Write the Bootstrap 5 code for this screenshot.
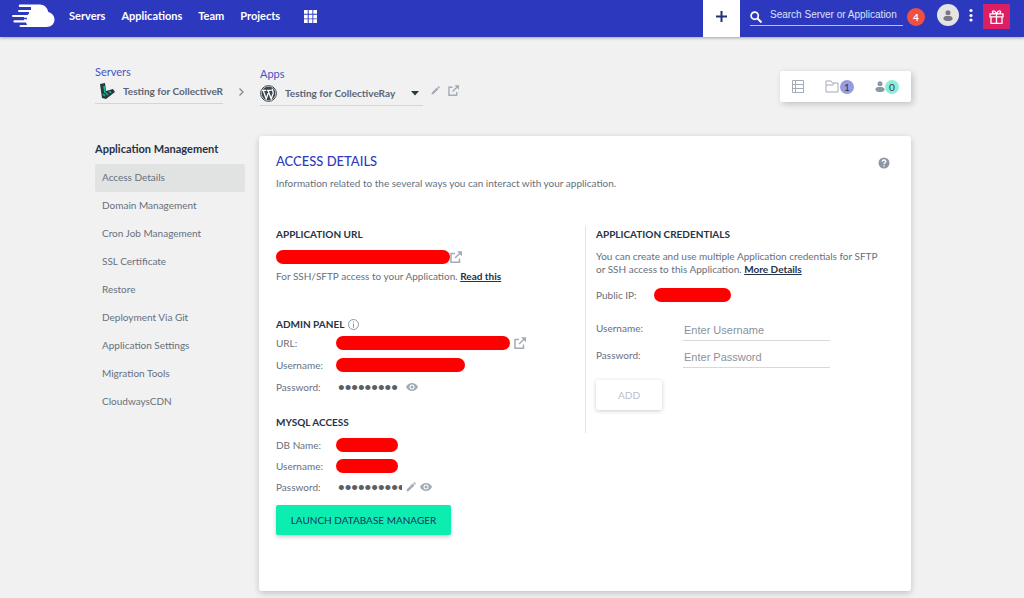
<!DOCTYPE html>
<html lang="en">
<head>
<meta charset="utf-8">
<meta name="viewport" content="width=device-width, initial-scale=1">
<title>Access Details</title>
<link href="https://cdn.jsdelivr.net/npm/bootstrap@5.3.0/dist/css/bootstrap.min.css" rel="stylesheet">
<style>
  body { background: #f1f1f1; color: #66707c; font: 10px/16px Lato, "Liberation Sans", sans-serif; }
  svg { display: block; flex: none; }
  button.plain { border: 0; background: none; padding: 0; color: #a3abb6; }

  .topbar { background: #2c39bf; height: 37px; padding: 0 14px 0 12px; box-shadow: 0 1px 3px #0005; }
  .topbar-links { padding-top: 8px; margin-left: 14px; }
  .topbar-link { color: #fff; font: 700 11px/16px Lato, sans-serif; text-decoration: none; }
  .add-new { width: 37px; height: 37px; background: #fff !important; }
  .search-box { border-bottom: 1px solid #bcc1f0; width: 153px; height: 22px; margin-left: 10px; }
  .search-box input { font: 10px/16px "Liberation Sans", sans-serif; color: #fff; background: none; border: 0; padding: 0; outline: 0; min-width: 0; }
  .search-box input::placeholder { color: #dfe1fa; opacity: 1; }
  .alert-count { width: 18px; height: 18px; background: #f0503f; color: #fff; font-weight: 700; }
  .avatar { width: 22px; height: 22px; background: #e4e4e4 !important; margin-left: 12px; }
  .gift { width: 27px; height: 25px; background: #dc1f62 !important; }

  .page { padding: 0 113px 0 95px; }
  .crumbs { height: 99px; }
  .crumb-label { color: #4453c6; font-size: 11px; line-height: 14px; }
  .app-pick .crumb-label { padding-top: 2px; }
  .picker { border-bottom: 1px solid #d5d5d5; height: 25px; }
  .picker select { appearance: none; background: none; border: 0; padding: 0; min-width: 0; width: 0; color: #5b6675; font: 700 10px/16px Lato, sans-serif; text-overflow: clip; }
  .server-pick { width: 128px; }
  .app-pick { width: 163px; }
  .stats { background: #fff; height: 31px; width: 131px; margin-top: 34px; border-radius: 2px; box-shadow: 2px 2px 6px #0003; padding: 0 12px; }
  .count { width: 14px; height: 14px; border-radius: 7px; color: #30364d; line-height: 14px; text-align: center; }
  .count-projects { background: #979be0; }
  .count-team { background: #8ceed8; }

  .side { width: 150px; margin-right: 14px; padding-top: 5px; }
  .side-title { font-size: 11px; line-height: 16px; font-weight: 700; color: #263248; margin: 0 0 7px; }
  .side .nav-link { color: #66707c; padding: 5px 7px 7px; line-height: 16px; }
  .side .nav-link.active { background: #e1e3e3; border-radius: 2px; }

  .panel { background: #fff; border-radius: 3px; box-shadow: 0 2px 6px #0003; min-height: 455px; padding: 15px 17px; margin-bottom: 7px; }
  .panel-title { color: #2f3cc0; font-size: 13px; line-height: 20px; margin: 0 0 4px; }
  .section-title { color: #263248; font-size: 10px; line-height: 16px; font-weight: 700; margin: 0; }
  .dark-link { color: #263248; font-weight: 700; }
  .panel-cols { margin-top: 35px; }
  .creds { width: 309px; border-left: 1px solid #e4e4e4; min-height: 207px; padding-left: 10px; }
  .creds-text { line-height: 13px; max-width: 288px; }
  .field-row { height: 22px; }
  .db-fields .field-row { height: 21px; }
  .field-row > :first-child { width: 60px; }
  .creds .field-row > :first-child { width: 58px; }
  .redacted { background: #f00; height: 14px; border-radius: 7px; }
  .w-url { width: 174px; } .w-user { width: 129px; } .w-db { width: 62px; } .w-ip { width: 77px; }
  .secret { border: 0; padding: 2px 0 0 2px; background: none; outline: 0; color: #5c5f64; font: 19px/20px "Liberation Sans", sans-serif; height: 22px; width: 66px; }
  .form-row { height: 27px; }
  .form-row label { width: 87px; }
  .form-row input { width: 147px; border: 0; border-bottom: 1px solid #d8d8d8; padding: 5px 1px 0; font: 11px/16px "Liberation Sans", sans-serif; outline: 0; background: none; }
  .form-row input::placeholder { color: #8a929c; opacity: 1; }
  .btn-launch { background: #0ceeb0 !important; color: #1c2f66 !important; border: 0; border-radius: 2px; height: 30px; padding: 0; font-size: 10px; line-height: 16px; font-weight: 400; box-shadow: 0 2px 4px #0003; width: 175px; }
  .btn-add { background: #fff !important; color: #b7c0cc !important; border: 0; opacity: 1 !important; border-radius: 2px; height: 30px; width: 66px; margin-top: 12px; padding: 0; font-size: 10px; font-weight: 400; box-shadow: 0 1px 4px #0003; }
</style>
</head>
<body>
<svg class="d-none">
  <symbol id="ext" viewBox="0 0 12 12"><path d="M5 2.500H1v8.700h8.500V7.500M11 1.200 5 7" fill="none" stroke="currentColor" stroke-width="1.500"/><path d="M7 .3h5v5z" fill="currentColor"/></symbol>
  <symbol id="pen" viewBox="0 0 10 10"><path d="M.5 9.500 1 7.200 6.600 1.600 8.400 3.400 2.800 9zM7.200 1 8.200 0 10 1.800 9 2.800z" fill="currentColor"/></symbol>
  <symbol id="eye" viewBox="0 0 12 8"><path d="M0 4C2.500-1.300 9.500-1.300 12 4 9.500 9.300 2.500 9.300 0 4z" fill="currentColor"/><circle cx="6" cy="4" r="2.500" fill="#fff"/><circle cx="6" cy="4" r="1.500" fill="currentColor"/></symbol>
  <symbol id="person" viewBox="0 0 10 11"><circle cx="5" cy="2.700" r="2.500" fill="currentColor"/><path d="M.3 8.500C1 5.900 3 6 5 6s4 0 4.700 2.500C9.400 10.800 7 11 5 11S.6 10.800.3 8.500z" fill="currentColor"/></symbol>
</svg>

<nav class="topbar d-flex align-items-start">
  <a href="#" aria-label="Home" class="mt-1"><svg width="43" height="24" viewBox="0 0 43 24" fill="#fff"><path d="M8 .5H28c4 0 7.500 3 8.300 7.500C40 9 42.500 12 42.500 15.500c0 4.500-3.400 7.500-8 7.500H8.500a1 1 0 0 1 0-2H15L14 18.500H2.500a1 1 0 0 1 0-2.200H12V13H1a1 1 0 0 1 0-2h14.500l1.500-1.500V8H7a1 1 0 0 1 0-2h12V3H8a1 1 0 0 1 0-2.500z"/><path d="M2 14.500h13M7 9.500h9M10 4.500h9M5 19.700h9" stroke="#2c39bf" stroke-width="1.500"/></svg></a>
  <div class="topbar-links d-flex align-items-center gap-3">
    <a class="topbar-link" href="#">Servers</a>
    <a class="topbar-link" href="#">Applications</a>
    <a class="topbar-link" href="#">Team</a>
    <a class="topbar-link" href="#">Projects</a>
    <button class="plain ms-2" aria-label="All products"><svg width="13" height="13" viewBox="0 0 13 13" fill="#fff"><path d="M0 0h3.700v3.700H0zM4.700 0h3.700v3.700H4.700zM9.300 0H13v3.700H9.300zM0 4.700h3.700v3.700H0zM4.700 4.700h3.700v3.700H4.700zM9.300 4.700H13v3.700H9.300zM0 9.300h3.700V13H0zM4.700 9.300h3.700V13H4.700zM9.300 9.300H13V13H9.300z"/></svg></button>
  </div>
  <div class="d-flex align-items-start ms-auto">
    <button class="plain add-new d-flex align-items-center justify-content-center pb-1" aria-label="Add"><svg width="13" height="13" viewBox="0 0 13 13"><path d="M6.500 1v11M1 6.500h11" stroke="#1f3475" stroke-width="2"/></svg></button>
    <label class="search-box d-flex align-items-center gap-2 mt-1"><svg width="12" height="12" viewBox="0 0 12 12" class="mt-1"><circle cx="4.700" cy="4.700" r="3.600" fill="none" stroke="#fff" stroke-width="1.700"/><path d="m7.500 7.500 4 4" stroke="#fff" stroke-width="2"/></svg><input class="flex-fill" type="text" aria-label="Search" placeholder="Search Server or Application"></label>
    <span class="alert-count rounded-circle d-flex align-items-center justify-content-center mt-2 ms-1">4</span>
    <button class="plain avatar rounded-circle d-flex align-items-center justify-content-center mt-1" aria-label="Account"><svg width="10" height="11" color="#77797e"><use href="#person"/></svg></button>
    <button class="plain mt-2 ms-1 px-1 me-1" aria-label="More"><svg width="8" height="14" viewBox="0 0 8 14" fill="#fff"><circle cx="4" cy="2.500" r="1.600"/><circle cx="4" cy="7.500" r="1.600"/><circle cx="4" cy="12" r="1.600"/></svg></button>
    <button class="plain gift d-flex align-items-center justify-content-center mt-1" aria-label="Gifts"><svg width="15" height="14" viewBox="0 0 15 14" fill="none" stroke="#fff" stroke-width="1.300"><path d="M1 3.800h13v3H1zM2 6.800v6.500h11V6.800M7.500 3.800v9.500M7.500 3.600C6 0 3 .2 3.500 2.300 3.700 3.500 5 3.700 7.500 3.700c2.500 0 3.800-.2 4-1.400C12 .2 9 0 7.500 3.600z"/></svg></button>
  </div>
</nav>

<div class="page">
  <div class="crumbs d-flex align-items-start">
    <div class="server-pick mt-4 pt-1">
      <label for="server" class="crumb-label d-block">Servers</label>
      <div class="picker d-flex align-items-center gap-2 ps-1">
        <svg width="16" height="17" viewBox="0 0 16 17"><path d="M1 1 6 0l1 8 7-2 2 3-9 7-4-1z" fill="#29383e"/><path d="m5 3 1 7M4 11l2 2M10 8l2 2M7 10l2 2" stroke="#18b695" stroke-width="1.700"/></svg>
        <select id="server" class="flex-fill"><option>Testing for CollectiveRay</option></select>
      </div>
    </div>
    <svg class="mt-5 ms-3 me-3" width="5" height="14" viewBox="0 0 5 14"><path d="m.5 3.500 3.500 3.500-3.500 3.500" fill="none" stroke="#7d8795" stroke-width="1.200"/></svg>
    <div class="app-pick mt-4 pt-1">
      <label for="app" class="crumb-label d-block">Apps</label>
      <div class="picker d-flex align-items-center gap-2">
        <svg width="17" height="17" viewBox="0 0 17 17"><circle cx="8.500" cy="8.500" r="7.900" fill="#fff" stroke="#3c464d"/><circle cx="8.500" cy="8.500" r="6.900" fill="#3c464d"/><path d="M2 5.300h4.300M7 5.300h4.500M3.200 5.500l3 8.300 2-5.500M8 5.500l3.200 8.300 2-5.600c.5-1.800-1.500-2.500-.8-4.400" fill="none" stroke="#fff" stroke-width="1.300"/></svg>
        <select id="app" class="flex-fill"><option>Testing for CollectiveRay</option></select>
        <svg width="8" height="5" viewBox="0 0 8 5" class="me-1"><path d="M0 0h8L4 4.500z" fill="#263b40"/></svg>
      </div>
    </div>
    <div class="d-flex gap-2 mt-5 ms-2">
      <button class="plain" aria-label="Rename"><svg width="9" height="9"><use href="#pen"/></svg></button>
      <button class="plain" aria-label="Open app"><svg width="11" height="11"><use href="#ext"/></svg></button>
    </div>
    <div class="stats d-flex align-items-center justify-content-between ms-auto">
      <svg width="12" height="13" viewBox="0 0 12 13" fill="none" stroke="#a3abb6"><path d="M.5.500h11v12H.5zM.5 4.500h11M.5 8.500h11M3.500.5v12"/></svg>
      <div class="d-flex align-items-center"><svg width="15" height="13" viewBox="0 0 15 13" fill="none" stroke="#a3abb6"><path d="M1 12V1h5l1.500 2H13v9zM1 5h7l1-2"/></svg><span class="count count-projects">1</span></div>
      <div class="d-flex align-items-center"><svg width="10" height="11" color="#8d97a5"><use href="#person"/></svg><span class="count count-team">0</span></div>
    </div>
  </div>

  <div class="d-flex">
    <aside class="side flex-shrink-0">
      <h2 class="side-title">Application Management</h2>
      <nav class="nav flex-column">
        <a class="nav-link active" href="#">Access Details</a>
        <a class="nav-link" href="#">Domain Management</a>
        <a class="nav-link" href="#">Cron Job Management</a>
        <a class="nav-link" href="#">SSL Certificate</a>
        <a class="nav-link" href="#">Restore</a>
        <a class="nav-link" href="#">Deployment Via Git</a>
        <a class="nav-link" href="#">Application Settings</a>
        <a class="nav-link" href="#">Migration Tools</a>
        <a class="nav-link" href="#">CloudwaysCDN</a>
      </nav>
    </aside>

    <main class="panel flex-fill">
      <div class="d-flex justify-content-between">
        <h1 class="panel-title">ACCESS DETAILS</h1>
        <button class="plain me-1" aria-label="Help"><svg width="12" height="12" viewBox="0 0 12 12"><circle cx="6" cy="6" r="5.500" fill="#8d97a5"/><path d="M4.200 4.800c0-2.500 3.600-2.300 3.600-.2C7.800 5.800 6 5.800 6 7.200M6 8.200v1.400" fill="none" stroke="#fff" stroke-width="1.300"/></svg></button>
      </div>
      <div>Information related to the several ways you can interact with your application.</div>

      <div class="panel-cols d-flex">
        <div class="flex-fill">
          <h2 class="section-title">APPLICATION URL</h2>
          <div class="d-flex align-items-center mt-2">
            <span class="redacted w-url"></span>
            <button class="plain" aria-label="Open URL"><svg width="12" height="12"><use href="#ext"/></svg></button>
          </div>
          <div class="mt-1">For SSH/SFTP access to your Application. <a class="dark-link" href="#">Read this</a></div>

          <div class="d-flex align-items-center gap-1 mt-4 pt-2">
            <h2 class="section-title">ADMIN PANEL</h2>
            <svg width="11" height="11" viewBox="0 0 11 11" fill="none" stroke="#8d97a5"><circle cx="5.500" cy="5.500" r="5"/><path d="M5.500 2.500v1.200M5.500 4.700v4"/></svg>
          </div>
          <div>
            <div class="field-row d-flex align-items-center"><span>URL:</span><span class="redacted w-url me-1"></span><button class="plain" aria-label="Open admin panel"><svg width="12" height="12"><use href="#ext"/></svg></button></div>
            <div class="field-row d-flex align-items-center"><span>Username:</span><span class="redacted w-user"></span></div>
            <div class="field-row d-flex align-items-center"><label for="admin-pass">Password:</label><input id="admin-pass" class="secret" type="password" readonly value="secretpwd"><button class="plain ms-1" aria-label="Show password"><svg width="12" height="8"><use href="#eye"/></svg></button></div>
          </div>

          <h2 class="section-title mt-3">MYSQL ACCESS</h2>
          <div class="db-fields pt-1">
            <div class="field-row d-flex align-items-center"><span>DB Name:</span><span class="redacted w-db"></span></div>
            <div class="field-row d-flex align-items-center"><span>Username:</span><span class="redacted w-db"></span></div>
            <div class="field-row d-flex align-items-center"><label for="db-pass">Password:</label><input id="db-pass" class="secret" type="password" readonly value="secretpwd42"><button class="plain ms-1" aria-label="Edit password"><svg width="10" height="10"><use href="#pen"/></svg></button><button class="plain ms-1" aria-label="Show database password"><svg width="12" height="8"><use href="#eye"/></svg></button></div>
          </div>
          <button class="btn btn-launch mt-2">LAUNCH DATABASE MANAGER</button>
        </div>

        <div class="align-self-start creds flex-shrink-0">
          <h2 class="section-title">APPLICATION CREDENTIALS</h2>
          <p class="creds-text mt-2 mb-2">You can create and use multiple Application credentials for SFTP or SSH access to this Application. <a class="dark-link" href="#">More Details</a></p>
          <div class="field-row d-flex align-items-center"><span>Public IP:</span><span class="redacted w-ip"></span></div>
          <form class="mt-2">
            <div class="form-row d-flex align-items-center"><label for="user">Username:</label><input id="user" class="align-self-stretch" type="text" placeholder="Enter Username"></div>
            <div class="form-row d-flex align-items-center"><label for="pass">Password:</label><input id="pass" class="align-self-stretch" type="password" placeholder="Enter Password"></div>
            <button class="btn btn-add" type="submit" disabled>ADD</button>
          </form>
        </div>
      </div>
    </main>
  </div>
</div>
<script src="https://cdn.jsdelivr.net/npm/bootstrap@5.3.0/dist/js/bootstrap.bundle.min.js"></script>
</body>
</html>
